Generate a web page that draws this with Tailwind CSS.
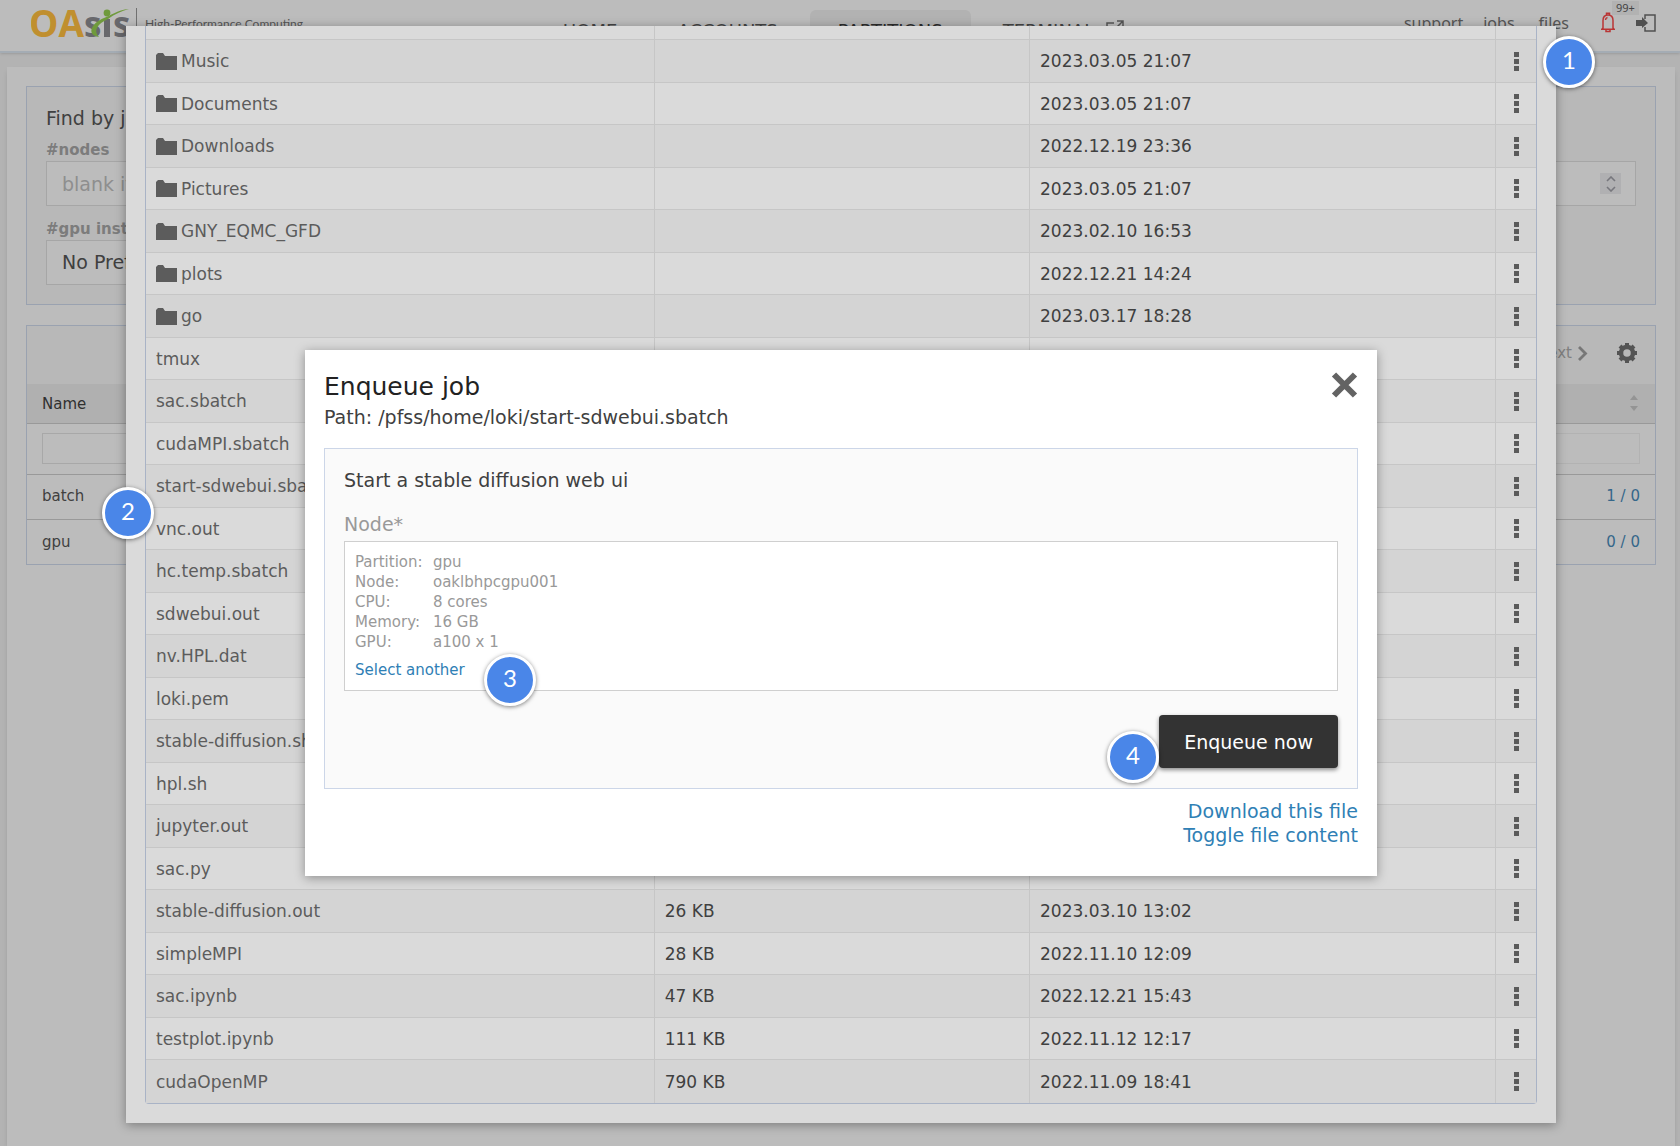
<!DOCTYPE html>
<html lang="en">
<head>
<meta charset="utf-8">
<title>OAsis - Partitions</title>
<script src="https://cdn.jsdelivr.net/npm/@tailwindcss/browser@4"></script>
</head>
<body class="relative flex min-h-screen flex-col overflow-x-hidden bg-[#b3b3b3] font-['DejaVu_Sans',sans-serif] text-[#404040]">

<header class="flex h-[53px] shrink-0 items-center border-b-2 border-[#a4acb4] bg-[#bcbcbc] pr-[24px] pl-[31px] shadow-sm">
  <div class="flex flex-1 items-center pb-1">
    <a href="#" aria-label="OAsis" class="block">
      <svg width="104" height="44" viewBox="0 0 104 44" class="block font-['Open_Sans',sans-serif] font-bold">
        <text x="-2" y="35" font-size="37" fill="#c08f2f">OA</text>
        <text x="53" y="35" font-size="35" fill="#68686c">s</text>
        <rect x="73" y="17" width="6" height="18" fill="#68686c"/>
        <text x="82" y="35" font-size="35" fill="#68686c">s</text>
        <circle cx="76" cy="11" r="3.400" fill="#6f9a3c"/>
        <path d="M98 7C86 8 79 14 73 16C60 21 55 33 68 35C62 29 66 22 77 17C84 12 90 9 98 7Z" fill="#6f9a3c"/>
      </svg>
    </a>
    <p class="ml-px flex h-[32px] items-center border-l border-[#707070] pl-2 font-['Lato',sans-serif] text-[12px] text-[#555]">High-Performance Computing</p>
  </div>
  <nav class="flex h-[41px] items-center gap-1 self-end text-[18px] text-[#444]">
    <a href="#" class="px-7">HOME</a>
    <a href="#" class="px-7">ACCOUNTS</a>
    <a href="#" class="flex h-full items-center rounded-md bg-[#b2b2b2] px-7 text-[#2c2c2c]">PARTITIONS</a>
    <a href="#" class="flex items-center gap-3 px-7">TERMINAL
      <svg width="18" height="18" viewBox="0 0 18 18" fill="none" stroke="#555" stroke-width="1.500" class="-mt-1"><path d="M8 3H1V17H14V10M7 11L17 1M11 1H17V7"/></svg>
    </a>
  </nav>
  <div class="flex flex-1 items-center justify-end pb-[6px] font-['Noto_Sans',sans-serif] text-base text-[#555]">
    <a href="#">support</a>
    <a href="#" class="ml-5">jobs</a>
    <a href="#" class="ml-6">files</a>
    <button type="button" aria-label="Notifications" class="relative ml-8 block">
      <svg width="14" height="21" viewBox="0 0 14 21" fill="none" stroke="#b93434" stroke-width="1.500"><path d="M2 16V8.500C2 5 4 3 7 3S12 5 12 8.500V16L13.300 17.300H.7L2 16ZM5.500 3V1.200H8.500V3M5 17.500V19.500H9V17.500M4.500 8Q4.500 6 6.500 5.500"/></svg>
      <span class="absolute -top-[11px] left-[11px] bg-[#b2b2b2] px-1 text-[11px] leading-[14px] text-[#444]">99+</span>
    </button>
    <button type="button" aria-label="Log out" class="ml-[21px] block">
      <svg width="20" height="18" viewBox="0 0 20 18"><path d="M9 5V1H19V17H9V13" fill="none" stroke="#505050" stroke-width="1.500"/><path d="M0 6H6V3L12 9L6 14V12H0Z" fill="#505050"/></svg>
    </button>
  </div>
</header>

<main class="mx-[7px] mt-[14px] mr-[5px] flex-1 bg-[#bcbcbc] px-[19px] pt-[19px] shadow-md">
  <form class="border border-[#9aa2b0] bg-[#b8b8b8] px-[19px] pt-[19px] pb-[19px]">
    <h2 class="text-[19px] leading-6">Find by job requirements</h2>
    <label for="nodes" class="mt-[10px] block text-[15px] leading-5 font-bold text-[#7c7c7c]">#nodes</label>
    <div class="relative mt-px">
      <input id="nodes" type="text" placeholder="blank if no preference" class="block h-[45px] w-full border border-[#a6a6a6] bg-[#bcbcbc] px-[15px] text-[19px] placeholder:text-[#8e8e8e]">
      <span class="absolute top-[12px] right-[15px] flex h-[21px] w-[21px] items-center justify-center bg-[#b0b0b2]">
        <svg width="10" height="16" viewBox="0 0 10 16" fill="none" stroke="#77777d" stroke-width="1.600"><path d="M1 5L5 1L9 5M1 11L5 15L9 11"/></svg>
      </span>
    </div>
    <label for="gpus" class="mt-[13px] block text-[15px] leading-5 font-bold text-[#7c7c7c]">#gpu instances</label>
    <select id="gpus" class="mt-px block h-[45px] w-[400px] appearance-none border border-[#a6a6a6] bg-[#bcbcbc] px-[15px] text-[19px]"><option>No Preference</option></select>
  </form>

  <section class="mt-5 border border-[#9aa2b0] text-[15px]">
    <div class="flex h-[58px] items-center justify-end gap-[5px] bg-[#b8b8b8] pr-[18px] pb-1 text-[#808080]">
      <a href="#" class="flex items-center gap-[6px]">Next
        <svg width="10" height="15" viewBox="0 0 10 15" fill="none" stroke="#777" stroke-width="2.800"><path d="M1 1L7.500 7.500L1 14"/></svg>
      </a>
      <button type="button" aria-label="Settings" class="ml-6 block">
        <svg width="20" height="20" viewBox="0 0 20 20"><circle cx="10" cy="10" r="6" fill="none" stroke="#545454" stroke-width="4.500"/><path d="M10 0V3M10 17V20M0 10H3M17 10H20M3 3L5 5M15 15L17 17M17 3L15 5M5 15L3 17" stroke="#545454" stroke-width="4"/></svg>
      </button>
    </div>
    <table class="w-full border-collapse">
      <thead>
        <tr class="h-[39px] border-b border-[#999] bg-[#b0b0b0] text-left">
          <th class="px-[15px] pt-[2px] font-normal text-[#303030]">Name</th>
          <th class="px-[15px]"><svg width="8" height="16" viewBox="0 0 8 16" fill="#949494" class="ml-auto mr-[2px]"><path d="M4 0L8 5H0ZM4 16L8 11H0Z"/></svg></th>
        </tr>
        <tr class="h-[51px] border-b border-[#999]">
          <th class="pl-[15px]"><input aria-label="Filter by name" class="block h-[31px] w-full border border-[#a8a8a8]"></th>
          <th class="pr-[15px]"><input aria-label="Filter by usage" class="block h-[31px] w-full border border-[#b2b2b2]"></th>
        </tr>
      </thead>
      <tbody>
        <tr class="h-[45px] border-b border-[#999]"><td class="px-[15px]">batch</td><td class="px-[15px] text-right text-[#35678a]"><a href="#">1 / 0</a></td></tr>
        <tr class="h-[45px]"><td class="px-[15px]">gpu</td><td class="px-[15px] text-right text-[#35678a]"><a href="#">0 / 0</a></td></tr>
      </tbody>
    </table>
  </section>
</main>

<!-- File browser -->
<div class="absolute top-[26px] right-[124px] left-[126px]">
  <div class="bg-[#dadada] px-[19px] pb-[19px] shadow-[0_2px_10px_rgba(0,0,0,0.35)]">
    <table class="w-full table-fixed border-separate border-spacing-0 rounded-b-sm border-x border-b border-[#a9b3c6] text-[17px] leading-5">
      <colgroup><col class="w-[36.600%]"><col class="w-[27%]"><col><col class="w-[40px]"></colgroup>
      <tbody id="files">
        <tr class="h-[14px]">
          <td class="border-r border-b border-[#c6c6c6]"></td><td class="border-r border-b border-[#c6c6c6]"></td><td class="border-r border-b border-[#c6c6c6]"></td><td class="border-b border-[#c6c6c6]"></td>
        </tr>
      </tbody>
    </table>
  </div>
  <span class="absolute top-[10px] -right-[39px] flex size-[52px] items-center justify-center rounded-full border-[3px] border-white bg-[#4a86e8] pb-1 font-['Lato',sans-serif] text-2xl text-white shadow-[0_1px_4px_rgba(0,0,0,0.5)]">1</span>
  <span class="absolute top-[461px] -left-[24px] flex size-[52px] items-center justify-center rounded-full border-[3px] border-white bg-[#4a86e8] pb-1 font-['Lato',sans-serif] text-2xl text-white shadow-[0_1px_4px_rgba(0,0,0,0.5)]">2</span>
</div>

<!-- Enqueue dialog -->
<div role="dialog" aria-labelledby="dlg-title" class="absolute top-[350px] right-[303px] left-[305px] bg-white px-[19px] pt-[22px] pb-[29px] text-[19px] leading-6 shadow-[0_2px_10px_rgba(0,0,0,0.35)]">
  <div class="flex items-start justify-between">
    <div>
      <h1 id="dlg-title" class="text-[25px] leading-[30px] text-[#222]">Enqueue job</h1>
      <p class="mt-[3px]">Path: /pfss/home/loki/start-sdwebui.sbatch</p>
    </div>
    <button type="button" aria-label="Close" class="block">
      <svg width="27" height="26" viewBox="0 0 27 26" stroke="#636363" stroke-width="6"><path d="M3 2.500L24 23.500M24 2.500L3 23.500"/></svg>
    </button>
  </div>
  <form class="mt-[19px] border border-[#ccd6e8] bg-[#fafafa] px-[19px] pt-[19px] pb-5">
    <h2>Start a stable diffusion web ui</h2>
    <p class="mt-5 text-[#999]">Node*</p>
    <div class="mt-[5px] border border-[#cfcfcf] bg-white p-[10px] text-[15px] leading-5 text-[#999]">
      <dl class="grid grid-cols-[78px_1fr]">
        <dt>Partition:</dt><dd>gpu</dd>
        <dt>Node:</dt><dd>oaklbhpcgpu001</dd>
        <dt>CPU:</dt><dd>8 cores</dd>
        <dt>Memory:</dt><dd>16 GB</dd>
        <dt>GPU:</dt><dd>a100 x 1</dd>
      </dl>
      <a href="#" class="mt-2 block text-[#2f80b5]">Select another</a>
    </div>
    <button type="button" class="mt-6 ml-auto block h-[53px] rounded-sm bg-[#333] px-[25px] text-white shadow-[0_2px_4px_rgba(0,0,0,0.45)]">Enqueue now</button>
  </form>
  <div class="mt-[10px] flex flex-col items-end text-[#2f80b5]">
    <a href="#">Download this file</a>
    <a href="#">Toggle file content</a>
  </div>
  <span class="absolute top-[304px] left-[179px] flex size-[52px] items-center justify-center rounded-full border-[3px] border-white bg-[#4a86e8] pb-1 font-['Lato',sans-serif] text-2xl text-white shadow-[0_1px_4px_rgba(0,0,0,0.5)]">3</span>
  <span class="absolute top-[381px] right-[218px] flex size-[52px] items-center justify-center rounded-full border-[3px] border-white bg-[#4a86e8] pb-1 font-['Lato',sans-serif] text-2xl text-white shadow-[0_1px_4px_rgba(0,0,0,0.5)]">4</span>
</div>

<script>
const files = [
  ['Music', '', '2023.03.05 21:07', 1], ['Documents', '', '2023.03.05 21:07', 1],
  ['Downloads', '', '2022.12.19 23:36', 1], ['Pictures', '', '2023.03.05 21:07', 1],
  ['GNY_EQMC_GFD', '', '2023.02.10 16:53', 1], ['plots', '', '2022.12.21 14:24', 1],
  ['go', '', '2023.03.17 18:28', 1],
  ['tmux', '', ''], ['sac.sbatch', '', ''], ['cudaMPI.sbatch', '', ''], ['start-sdwebui.sbatch', '', ''],
  ['vnc.out', '', ''], ['hc.temp.sbatch', '', ''], ['sdwebui.out', '', ''], ['nv.HPL.dat', '', ''],
  ['loki.pem', '', ''], ['stable-diffusion.sh', '', ''], ['hpl.sh', '', ''], ['jupyter.out', '', ''], ['sac.py', '', ''],
  ['stable-diffusion.out', '26 KB', '2023.03.10 13:02'], ['simpleMPI', '28 KB', '2022.11.10 12:09'],
  ['sac.ipynb', '47 KB', '2022.12.21 15:43'], ['testplot.ipynb', '111 KB', '2022.11.12 12:17'],
  ['cudaOpenMP', '790 KB', '2022.11.09 18:41']
];
const folder = '<svg width="21" height="17" viewBox="0 0 21 17" fill="#5c5c5c" class="mr-1 shrink-0"><path d="M0 17V2L2 0H7L9 3H21V17Z"/></svg>';
document.getElementById('files').insertAdjacentHTML('beforeend', files.map(([name, size, date, dir], i) => {
  const edge = i === files.length - 1 ? 'border-b-0' : 'border-b';
  return `<tr class="h-[42px] even:h-[43px] even:bg-[#d4d4d4]">
    <td class="${edge} border-r border-[#c6c6c6] px-[10px] text-[#5c5c5c]"><div class="flex items-center">${dir ? folder : ''}${name}</div></td>
    <td class="${edge} border-r border-[#c6c6c6] px-[10px]">${size}</td>
    <td class="${edge} border-r border-[#c6c6c6] px-[10px]">${date}</td>
    <td class="${edge} border-[#c6c6c6]"><button type="button" aria-label="Actions" class="mx-auto block"><svg width="5" height="19" viewBox="0 0 5 19" fill="#5a5a5a"><path d="M0 0H5V5H0ZM0 7H5V12H0ZM0 14H5V19H0Z"/></svg></button></td>
  </tr>`;
}).join(''));
</script>
</body>
</html>
